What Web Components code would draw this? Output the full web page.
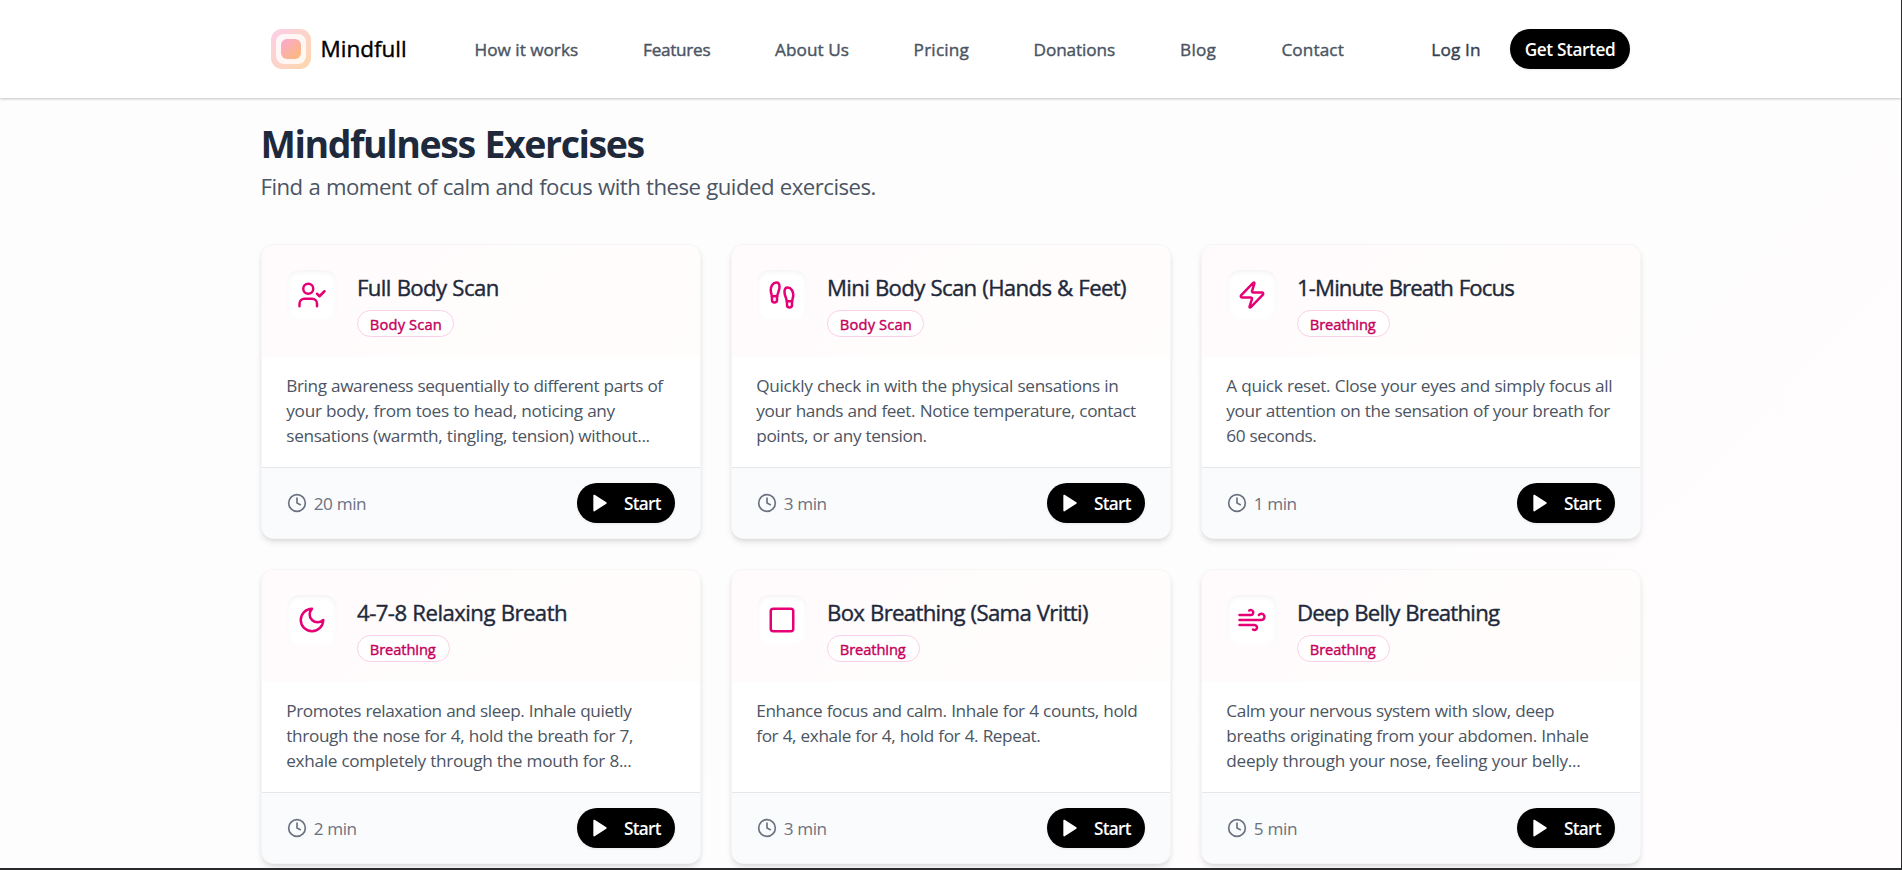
<!DOCTYPE html>
<html lang="en">
<head>
<meta charset="utf-8">
<title>Mindfull</title>
<style>
html,body{margin:0;height:100%;overflow:hidden}
body{font-family:"Open Sans","Noto Sans",sans-serif}
</style>
</head>
<body>
<mind-app></mind-app>
<script>
const ICONS = {
  user: '<path d="m16 11 2 2 4-4"/><path d="M16 21v-2a4 4 0 0 0-4-4H6a4 4 0 0 0-4 4v2"/><circle cx="9" cy="7" r="4"/>',
  feet: '<path d="M4 16v-2.38C4 11.5 2.97 10.5 3 8c.03-2.72 1.49-6 4.5-6C9.37 2 10 3.8 10 5.5c0 3.11-2 5.66-2 8.68V16a2 2 0 1 1-4 0Z"/><path d="M20 20v-2.38c0-2.12 1.03-3.12 1-5.62-.03-2.72-1.49-6-4.5-6C14.63 6 14 7.8 14 9.5c0 3.11 2 5.66 2 8.68V20a2 2 0 1 0 4 0Z"/><path d="M16 17h4"/><path d="M4 13h4"/>',
  zap: '<path d="M4 14a1 1 0 0 1-.78-1.63l9.9-10.2a.5.5 0 0 1 .86.46l-1.92 6.02A1 1 0 0 0 13 10h7a1 1 0 0 1 .78 1.63l-9.9 10.2a.5.5 0 0 1-.86-.46l1.92-6.02A1 1 0 0 0 11 14z"/>',
  moon: '<path d="M12 3a6 6 0 0 0 9 9 9 9 0 1 1-9-9Z"/>',
  square: '<rect width="18" height="18" x="3" y="3" rx="2"/>',
  wind: '<path d="M12.8 19.6A2 2 0 1 0 14 16H2"/><path d="M17.5 8a2.5 2.5 0 1 1 2 4H2"/><path d="M9.8 4.4A2 2 0 1 1 11 8H2"/>',
  clock: '<circle cx="12" cy="12" r="10"/><polyline points="12 6 12 12 16 14"/>',
  play: '<polygon points="5 3 19 12 5 21 5 3" fill="currentColor"/>'
};

const define = (name, render, after) => customElements.define(name, class extends HTMLElement {
  connectedCallback() {
    if (this.shadowRoot) return;
    this.attachShadow({ mode: 'open' }).innerHTML = render(this);
    if (after) after(this);
  }
});

const pen = document.createElement('canvas').getContext('2d');

// A single line of text, tracked so that its glyphs span the "w" attribute; spaces keep their natural width.
define('fit-line', () => `<style>:host{display:block;white-space:nowrap}:host([medium]){-webkit-text-stroke:.4px currentColor}</style><slot></slot>`, el => {
  const s = getComputedStyle(el), t = el.textContent;
  pen.font = `${s.fontWeight} ${s.fontSize} ${s.fontFamily}`;
  const m = pen.measureText(t);
  const ink = m.actualBoundingBoxRight + m.actualBoundingBoxLeft;
  const gaps = t.split(' ').length - 1;
  const track = (+el.getAttribute('w') - ink) / (t.length - 1 - gaps);
  el.style.letterSpacing = track.toFixed(3) + 'px';
  el.style.wordSpacing = (-track).toFixed(3) + 'px';
});

define('line-icon', el => `<style>:host{display:block;flex:none}svg{display:block;width:100%;height:100%}</style>
<svg viewBox="0 0 24 24" fill="none" stroke="currentColor" stroke-width="2" stroke-linecap="round" stroke-linejoin="round">${ICONS[el.getAttribute('name')]}</svg>`);

define('brand-mark', () => `<style>
:host{display:flex;align-items:center;gap:9.5px;color:#000;font-size:22.5px;line-height:30px}
.a{width:40px;height:40px;border-radius:11px;background:linear-gradient(135deg,#fbcfe8,#fed7aa);display:grid;place-items:center}
.b{width:30px;height:30px;border-radius:8px;background:rgba(255,255,255,.8);display:grid;place-items:center}
.c{width:20px;height:20px;border-radius:6px;background:linear-gradient(135deg,#f9a8d4,#fdba74)}
fit-line{margin-top:-1px}
</style><div class="a"><div class="b"><div class="c"></div></div></div><fit-line medium w="82.5">Mindfull</fit-line>`);

define('site-header', () => `<style>
:host{display:grid;grid-template-columns:203.6px 956.7px 78.7px 120px;align-items:center;box-sizing:border-box;height:98px;padding-left:271px;background:#fff;box-shadow:0 1px 3px rgba(0,0,0,.14),0 1px 2px rgba(0,0,0,.1);position:relative;font-size:17.2px;line-height:25px;color:#4b5563}
nav{display:grid;grid-template-columns:168.5px 132px 138.5px 120px 146.5px 101.3px auto}
.login{color:#374151}
.cta{display:grid;place-items:center;height:40px;border-radius:20px;background:#000;color:#fff;font-weight:600;box-shadow:0 1px 3px rgba(0,0,0,.08)}
</style>
<brand-mark></brand-mark>
<nav><fit-line medium w="102.3">How it works</fit-line><fit-line medium w="66.3">Features</fit-line><fit-line medium w="73.7">About Us</fit-line><fit-line medium w="54">Pricing</fit-line><fit-line medium w="80.3">Donations</fit-line><fit-line medium w="34.5">Blog</fit-line><fit-line medium w="61.3">Contact</fit-line></nav>
<fit-line medium class="login" w="47.7">Log In</fit-line>
<div class="cta"><fit-line w="89.3">Get Started</fit-line></div>`);

define('tag-pill', () => `<style>
:host{display:block;box-sizing:border-box;height:27px;border:1px solid #fbcfe8;border-radius:14px;background:#fff;padding:0 0 0 11.8px;font-size:14.7px;line-height:26px;color:#c6005c}
</style><slot></slot>`);

define('start-button', () => `<style>
:host{display:flex;align-items:center;box-sizing:border-box;width:98px;height:40px;border-radius:20px;background:#000;color:#fff;padding-left:12.5px;font-size:17.2px;font-weight:600;line-height:25px;box-shadow:0 1px 3px rgba(0,0,0,.08)}
line-icon{width:20px;height:20px;margin-right:14.4px}
</style><line-icon name="play"></line-icon><fit-line w="37.8">Start</fit-line>`);

define('exercise-card', el => {
  const [icon, tag, mins, mw] = ['icon', 'tag', 'mins', 'mw'].map(k => el.getAttribute(k));
  const [pw, tw] = tag === 'Body Scan' ? [97, 70] : [93, 65];
  return `<style>
:host{display:flex;flex-direction:column;box-sizing:border-box;height:295px;border:1px solid #f5f5f6;border-radius:12.5px;overflow:hidden;background:#fff;box-shadow:0 4px 7px -1px rgba(0,0,0,.1),0 2px 5px -2px rgba(0,0,0,.1)}
header{display:flex;gap:20px;box-sizing:border-box;height:112px;padding:25px 24px 0 25px;background:linear-gradient(135deg,#fffbfd,#fffdfb)}
.box{width:50px;height:50px;border-radius:12.5px;background:#fff;display:grid;place-items:center;color:#e60076;box-shadow:inset 0 2px 5px rgba(0,0,0,.05)}
.box line-icon{width:30px;height:30px}
.head{padding-top:3.5px;font-size:22.2px;line-height:28px;color:#1e293b}
tag-pill{margin-top:8.5px}
.desc{box-sizing:border-box;height:110px;padding:16px 24px 0 24.3px;font-size:17.2px;line-height:25px;color:#4b5563}
footer{flex:1;display:flex;justify-content:space-between;align-items:flex-start;border-top:1px solid #e5e7eb;background:#fafbfd;padding:15px 25px 0 25px;font-size:17.2px;line-height:25px;color:#6b7280}
.time{display:flex;align-items:center;height:40px;gap:6.7px}
.time line-icon{width:20px;height:20px}
</style>
<header><div class="box"><line-icon name="${icon}"></line-icon></div>
<div class="head"><slot name="title"></slot><tag-pill style="width:${pw}px"><fit-line medium w="${tw}">${tag}</fit-line></tag-pill></div></header>
<div class="desc"><slot></slot></div>
<footer><div class="time"><line-icon name="clock"></line-icon><fit-line w="${mw}">${mins} min</fit-line></div><start-button></start-button></footer>`;
});

// icon, tag, minutes, width of the minutes, title, width of the title, lines with their widths
const CARDS = [
  ['user', 'Body Scan', 20, 52.3, 'Full Body Scan', 138.7, [['Bring awareness sequentially to different parts of', 377], ['your body, from toes to head, noticing any', 329.3], ['sensations (warmth, tingling, tension) without...', 363.3]]],
  ['feet', 'Body Scan', 3, 42.7, 'Mini Body Scan (Hands & Feet)', 297, [['Quickly check in with the physical sensations in', 361], ['your hands and feet. Notice temperature, contact', 379.7], ['points, or any tension.', 169.3]]],
  ['zap', 'Breathing', 1, 41.7, '1-Minute Breath Focus', 215.3, [['A quick reset. Close your eyes and simply focus all', 385], ['your attention on the sensation of your breath for', 384], ['60 seconds.', 90]]],
  ['moon', 'Breathing', 2, 42.7, '4-7-8 Relaxing Breath', 209, [['Promotes relaxation and sleep. Inhale quietly', 345], ['through the nose for 4, hold the breath for 7,', 346.7], ['exhale completely through the mouth for 8...', 345]]],
  ['square', 'Breathing', 3, 42.7, 'Box Breathing (Sama Vritti)', 259, [['Enhance focus and calm. Inhale for 4 counts, hold', 380], ['for 4, exhale for 4, hold for 4. Repeat.', 284]]],
  ['wind', 'Breathing', 5, 42.3, 'Deep Belly Breathing', 201, [['Calm your nervous system with slow, deep', 326.7], ['breaths originating from your abdomen. Inhale', 361], ['deeply through your nose, feeling your belly...', 354]]]
];

define('mind-app', () => `<style>
:host{display:block;box-sizing:border-box;width:1902px;height:870px;overflow:hidden;border-right:1px solid #2b2b2d;border-bottom:2px solid #2b2b2d;background:linear-gradient(135deg,#fdfdfd,#fffdfe)}
main{padding:23px 0 0 261px;width:1380px}
h1{margin:0;font-size:37.5px;line-height:46px;font-weight:700;color:#1e293b}
p{margin:4px 0 0;font-size:22.2px;line-height:32px;color:#4b5563}
h1 fit-line,p fit-line{margin-left:-.5px}
section{display:grid;grid-template-columns:repeat(3,440px);gap:30px;margin-top:41px}
</style>
<site-header></site-header>
<main><h1><fit-line w="381">Mindfulness Exercises</fit-line></h1>
<p><fit-line w="613">Find a moment of calm and focus with these guided exercises.</fit-line></p>
<section>${CARDS.map(([i, g, m, mw, t, tw, ls]) => `<exercise-card icon="${i}" tag="${g}" mins="${m}" mw="${mw}"><fit-line medium slot="title" w="${tw}">${t.replace('&', '&amp;')}</fit-line>${ls.map(([l, w]) => `<fit-line w="${w}">${l}</fit-line>`).join('')}</exercise-card>`).join('')}</section></main>`);
</script>
</body>
</html>
